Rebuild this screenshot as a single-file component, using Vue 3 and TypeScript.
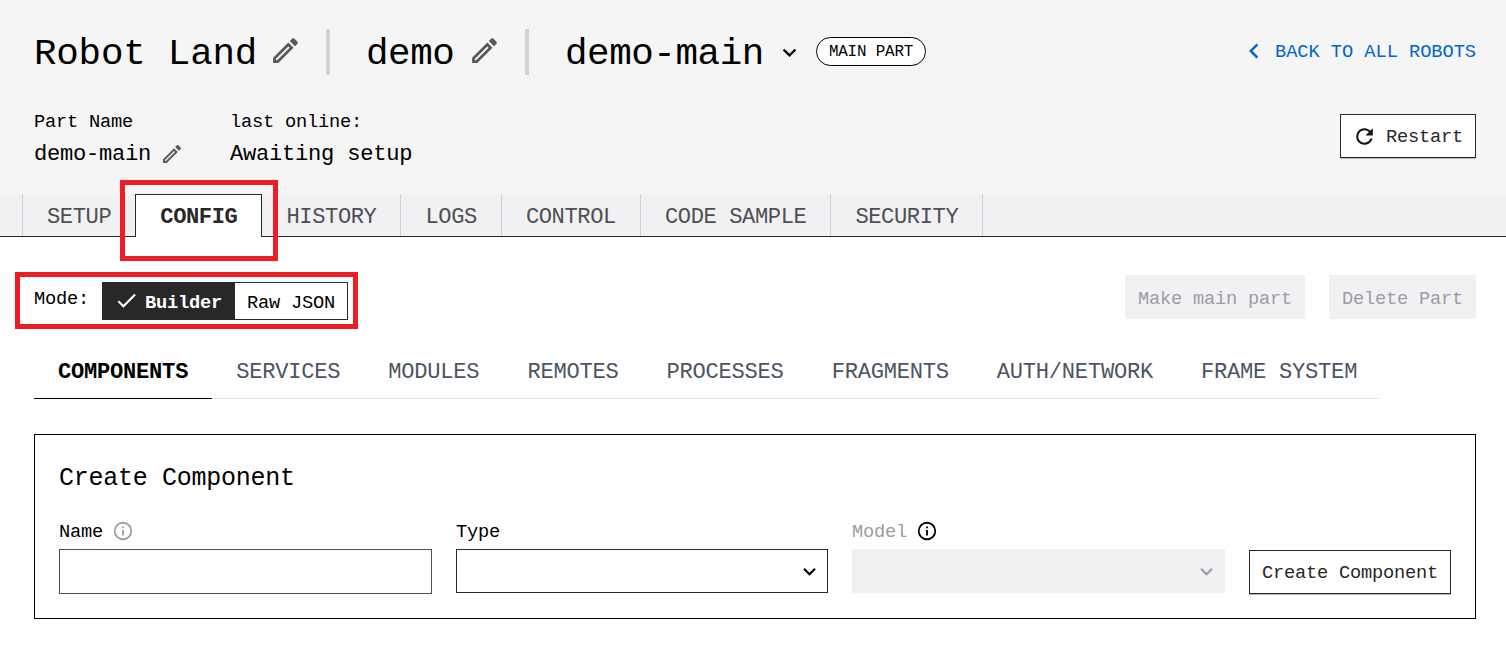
<script setup lang="ts">
interface Tab {
  label: string
  active?: boolean
}

const pageTabs: Tab[] = [
  { label: 'SETUP' },
  { label: 'CONFIG', active: true },
  { label: 'HISTORY' },
  { label: 'LOGS' },
  { label: 'CONTROL' },
  { label: 'CODE SAMPLE' },
  { label: 'SECURITY' },
]

const configTabs: Tab[] = [
  { label: 'COMPONENTS', active: true },
  { label: 'SERVICES' },
  { label: 'MODULES' },
  { label: 'REMOTES' },
  { label: 'PROCESSES' },
  { label: 'FRAGMENTS' },
  { label: 'AUTH/NETWORK' },
  { label: 'FRAME SYSTEM' },
]

const pencil =
  'M14.06,9L15,9.94L5.92,19H5V18.08L14.06,9M17.66,3C17.41,3 17.15,3.1 16.96,3.29L15.13,5.12L18.88,8.87L20.71,7.04C21.1,6.65 21.1,6 20.71,5.63L18.37,3.29C18.17,3.09 17.92,3 17.66,3M14.06,6.19L3,17.25V21H6.75L17.81,9.94L14.06,6.19Z'
const chevronDown = 'M7.41,8.58L12,13.17L16.59,8.58L18,10L12,16L6,10L7.41,8.58Z'
const chevronLeft = 'M15.41,16.58L10.83,12L15.41,7.41L14,6L8,12L14,18L15.41,16.58Z'
const refresh =
  'M17.65,6.35C16.2,4.9 14.21,4 12,4A8,8 0 0,0 4,12A8,8 0 0,0 12,20C15.73,20 18.84,17.45 19.73,14H17.65C16.83,16.33 14.61,18 12,18A6,6 0 0,1 6,12A6,6 0 0,1 12,6C13.66,6 15.14,6.69 16.22,7.78L13,11H20V4L17.65,6.35Z'
const check = 'M21,7L9,19L3.5,13.5L4.91,12.09L9,16.17L19.59,5.59L21,7Z'
const info =
  'M11,9H13V7H11M12,20C7.59,20 4,16.41 4,12C4,7.59 7.59,4 12,4C16.41,4 20,7.59 20,12C20,16.41 16.41,20 12,20M12,2A10,10 0 0,0 2,12A10,10 0 0,0 12,22A10,10 0 0,0 22,12A10,10 0 0,0 12,2M11,17H13V11H11V17Z'
</script>

<template>
  <div class="page">
    <header class="header">
      <div class="title-row">
        <h1 class="title robot">Robot Land</h1>
        <svg class="icon edit-lg" viewBox="0 0 24 24"><path :d="pencil" /></svg>
        <span class="divider"></span>
        <span class="title location">demo</span>
        <svg class="icon edit-lg" viewBox="0 0 24 24"><path :d="pencil" /></svg>
        <span class="divider"></span>
        <span class="title part">demo-main</span>
        <svg class="icon part-chevron" viewBox="0 0 24 24"><path :d="chevronDown" /></svg>
        <span class="badge">MAIN PART</span>
        <a class="back">
          <svg class="icon back-icon" viewBox="0 0 24 24"><path :d="chevronLeft" /></svg>
          <span>BACK TO ALL ROBOTS</span>
        </a>
      </div>
      <div class="meta-row">
        <div class="meta meta-name">
          <div class="meta-label">Part Name</div>
          <div class="meta-value">
            <span>demo-main</span>
            <svg class="icon edit-sm" viewBox="0 0 24 24"><path :d="pencil" /></svg>
          </div>
        </div>
        <div class="meta">
          <div class="meta-label">last online:</div>
          <div class="meta-value">Awaiting setup</div>
        </div>
        <button class="restart">
          <svg class="icon restart-icon" viewBox="0 0 24 24"><path :d="refresh" /></svg>
          <span>Restart</span>
        </button>
      </div>
    </header>

    <nav class="tabs">
      <a v-for="tab in pageTabs" :key="tab.label" class="tab" :class="{ active: tab.active }">{{ tab.label }}</a>
    </nav>

    <main class="content">
      <div class="toolbar">
        <span class="mode-label">Mode:</span>
        <div class="mode-switch">
          <button class="mode on">
            <svg class="icon check" viewBox="0 0 24 24"><path :d="check" /></svg>
            <span>Builder</span>
          </button>
          <button class="mode off">Raw JSON</button>
        </div>
        <div class="actions">
          <button class="disabled make-main">Make main part</button>
          <button class="disabled delete">Delete Part</button>
        </div>
      </div>

      <nav class="subtabs">
        <a v-for="tab in configTabs" :key="tab.label" class="subtab" :class="{ active: tab.active }">{{ tab.label }}</a>
      </nav>

      <section class="card">
        <h2 class="card-title">Create Component</h2>
        <div class="form">
          <div class="field">
            <div class="label">
              <span>Name</span>
              <svg class="icon info muted" viewBox="0 0 24 24"><path :d="info" /></svg>
            </div>
            <div class="input"></div>
          </div>
          <div class="field">
            <div class="label"><span>Type</span></div>
            <div class="select">
              <svg class="icon select-icon" viewBox="0 0 24 24"><path :d="chevronDown" /></svg>
            </div>
          </div>
          <div class="field">
            <div class="label">
              <span class="faded">Model</span>
              <svg class="icon info" viewBox="0 0 24 24"><path :d="info" /></svg>
            </div>
            <div class="select off">
              <svg class="icon select-icon" viewBox="0 0 24 24"><path :d="chevronDown" /></svg>
            </div>
          </div>
          <button class="create">Create Component</button>
        </div>
      </section>
    </main>

    <div class="highlight highlight-tab"></div>
    <div class="highlight highlight-mode"></div>
  </div>
</template>

<style>
body {
  margin: 0;
  background: #fff;
}
</style>

<style scoped>
.page {
  position: relative;
  width: 1506px;
  height: 646px;
  overflow: hidden;
  background: #fff;
  color: #000;
  font-family: 'Liberation Mono', monospace;
  font-size: 18.7px;
  white-space: nowrap;
}
.page * {
  box-sizing: border-box;
  letter-spacing: -0.011em;
}
button {
  font: inherit;
  padding: 0;
  border: 0;
  border-radius: 0;
  background: none;
  color: inherit;
  display: flex;
  align-items: center;
}
.icon {
  display: block;
  flex: none;
  fill: currentColor;
}

.header {
  height: 194px;
  background: #f5f5f5;
  padding: 29px 30px 0 34px;
}
.title-row {
  display: flex;
  align-items: center;
  height: 46px;
}
.title {
  margin: 0;
  flex: none;
  font-size: 37.5px;
  font-weight: 400;
  line-height: 46px;
  padding-top: 3px;
}
.page .robot {
  width: 235px;
  letter-spacing: -0.2px;
}
.edit-lg {
  width: 33px;
  height: 33px;
  color: #5c5856;
  margin-top: -3px;
}
.divider {
  width: 4px;
  height: 46px;
  margin-left: 24px;
  background: #d1d5db;
  flex: none;
}
.location {
  width: 102px;
  margin-left: 36px;
}
.part {
  width: 211px;
  margin-left: 36px;
}
.part-chevron {
  width: 27px;
  height: 27px;
}
.badge {
  display: flex;
  align-items: center;
  justify-content: center;
  width: 110px;
  height: 29px;
  margin: -1px 0 0 13px;
  border: 1px solid #000;
  border-radius: 15px;
  background: #fff;
  font-size: 15.9px;
  padding-top: 1px;
}
.back {
  display: flex;
  align-items: center;
  margin-left: auto;
  color: #0066cc;
}
.page .back span {
  letter-spacing: -0.05px;
}
.back-icon {
  width: 30px;
  height: 30px;
  margin-right: 6px;
  margin-top: -2px;
}
.meta-row {
  display: flex;
  padding-top: 37px;
}
.meta-name {
  width: 196px;
}
.meta-label {
  height: 22px;
  line-height: 22px;
  margin-top: -1px;
}
.meta-value {
  display: flex;
  align-items: center;
  height: 24px;
  margin-top: 9px;
  font-size: 22.1px;
}
.edit-sm {
  width: 24px;
  height: 24px;
  margin-left: 9px;
  color: #5c5856;
}
.restart {
  width: 136px;
  height: 44px;
  margin: 2px 0 0 auto;
  padding-left: 11px;
  border: 1px solid #282829;
  box-shadow: 0 1px 0 #b8b8b8;
  background: #fff;
  color: #282829;
}
.restart span {
  margin-left: 9px;
  padding-top: 1px;
}
.restart-icon {
  width: 25px;
  height: 25px;
  color: #131414;
}

.tabs {
  display: flex;
  height: 43px;
  padding-left: 22px;
  background: #f1f1f4;
  border-bottom: 1px solid #282829;
}
.page .tab {
  height: 42px;
  line-height: 44px;
  padding: 2px 24px 0;
  border-right: 1px solid #d0d0d8;
  color: #4e4f52;
  font-size: 22.1px;
  letter-spacing: -0.4px;
}
.page .tab:first-child {
  border-left: 1px solid #d0d0d8;
  border-right: 0;
}
.page .tab.active {
  height: 43px;
  padding-top: 1px;
  background: #fff;
  color: #282829;
  border: 1px solid #282829;
  border-bottom: 0;
  font-weight: 700;
}

.content {
  padding: 38px 30px 0 34px;
}
.toolbar {
  display: flex;
  height: 44px;
}
.mode-label {
  width: 68px;
  line-height: 48px;
}
.mode-switch {
  display: flex;
  width: 246px;
  height: 38px;
  margin-top: 7px;
  border: 1px solid #282829;
}
.mode {
  height: 36px;
  padding-top: 3px;
}
.mode.on {
  width: 132px;
  padding-left: 11px;
  background: #282829;
  color: #fff;
  font-weight: 700;
}
.mode.off {
  padding-left: 12px;
}
.check {
  width: 25px;
  height: 25px;
  margin: -4px 6px 0 0;
}
.actions {
  display: flex;
  gap: 24px;
  margin-left: auto;
}
.disabled {
  height: 44px;
  justify-content: center;
  padding-top: 3px;
  background: #f1f1f4;
  color: #9c9ca4;
}
.make-main {
  width: 180px;
}
.delete {
  width: 147px;
}

.subtabs {
  display: flex;
  width: 1346px;
  height: 49px;
  margin-top: 31px;
  border-bottom: 1px solid #e4e4e6;
}
.subtab {
  height: 49px;
  line-height: 46px;
  padding: 0 24px;
  color: #4b5563;
  font-size: 22.1px;
}
.subtab.active {
  color: #000;
  font-weight: 700;
  border-bottom: 1px solid #000;
}

.card {
  width: 1442px;
  height: 185px;
  margin-top: 35px;
  padding: 27px 24px 0;
  border: 1px solid #000;
}
.card-title {
  margin: 0;
  font-size: 25px;
  font-weight: 400;
  line-height: 34px;
}
.form {
  display: grid;
  grid-template-columns: 373px 372px 373px 202px;
  column-gap: 24px;
  margin-top: 21px;
}
.label {
  display: flex;
  align-items: center;
  height: 32px;
  line-height: 27px;
  padding-bottom: 4px;
}
.label span {
  padding-top: 3px;
}
.info {
  width: 22px;
  height: 22px;
  margin-left: 9px;
}
.muted,
.faded {
  color: #9c9ca4;
}
.input {
  height: 45px;
  border: 1px solid #4e4f52;
}
.select {
  display: flex;
  align-items: center;
  justify-content: flex-end;
  height: 44px;
  padding: 0 5px 0 0;
  border: 1px solid #282829;
}
.select.off {
  background: #f1f1f4;
  border-color: #f1f1f4;
  color: #9c9ca4;
}
.select-icon {
  width: 25px;
  height: 25px;
}
.create {
  height: 44px;
  margin-top: 33px;
  padding-top: 2px;
  justify-content: center;
  border: 1px solid #282829;
  box-shadow: 0 1px 0 #b8b8b8;
  color: #282829;
}

.highlight {
  position: absolute;
  border: 5px solid #ee1c25;
  pointer-events: none;
}
.highlight-tab {
  left: 120px;
  top: 180px;
  width: 158px;
  height: 81px;
}
.highlight-mode {
  left: 15px;
  top: 272px;
  width: 343px;
  height: 57px;
}
</style>
